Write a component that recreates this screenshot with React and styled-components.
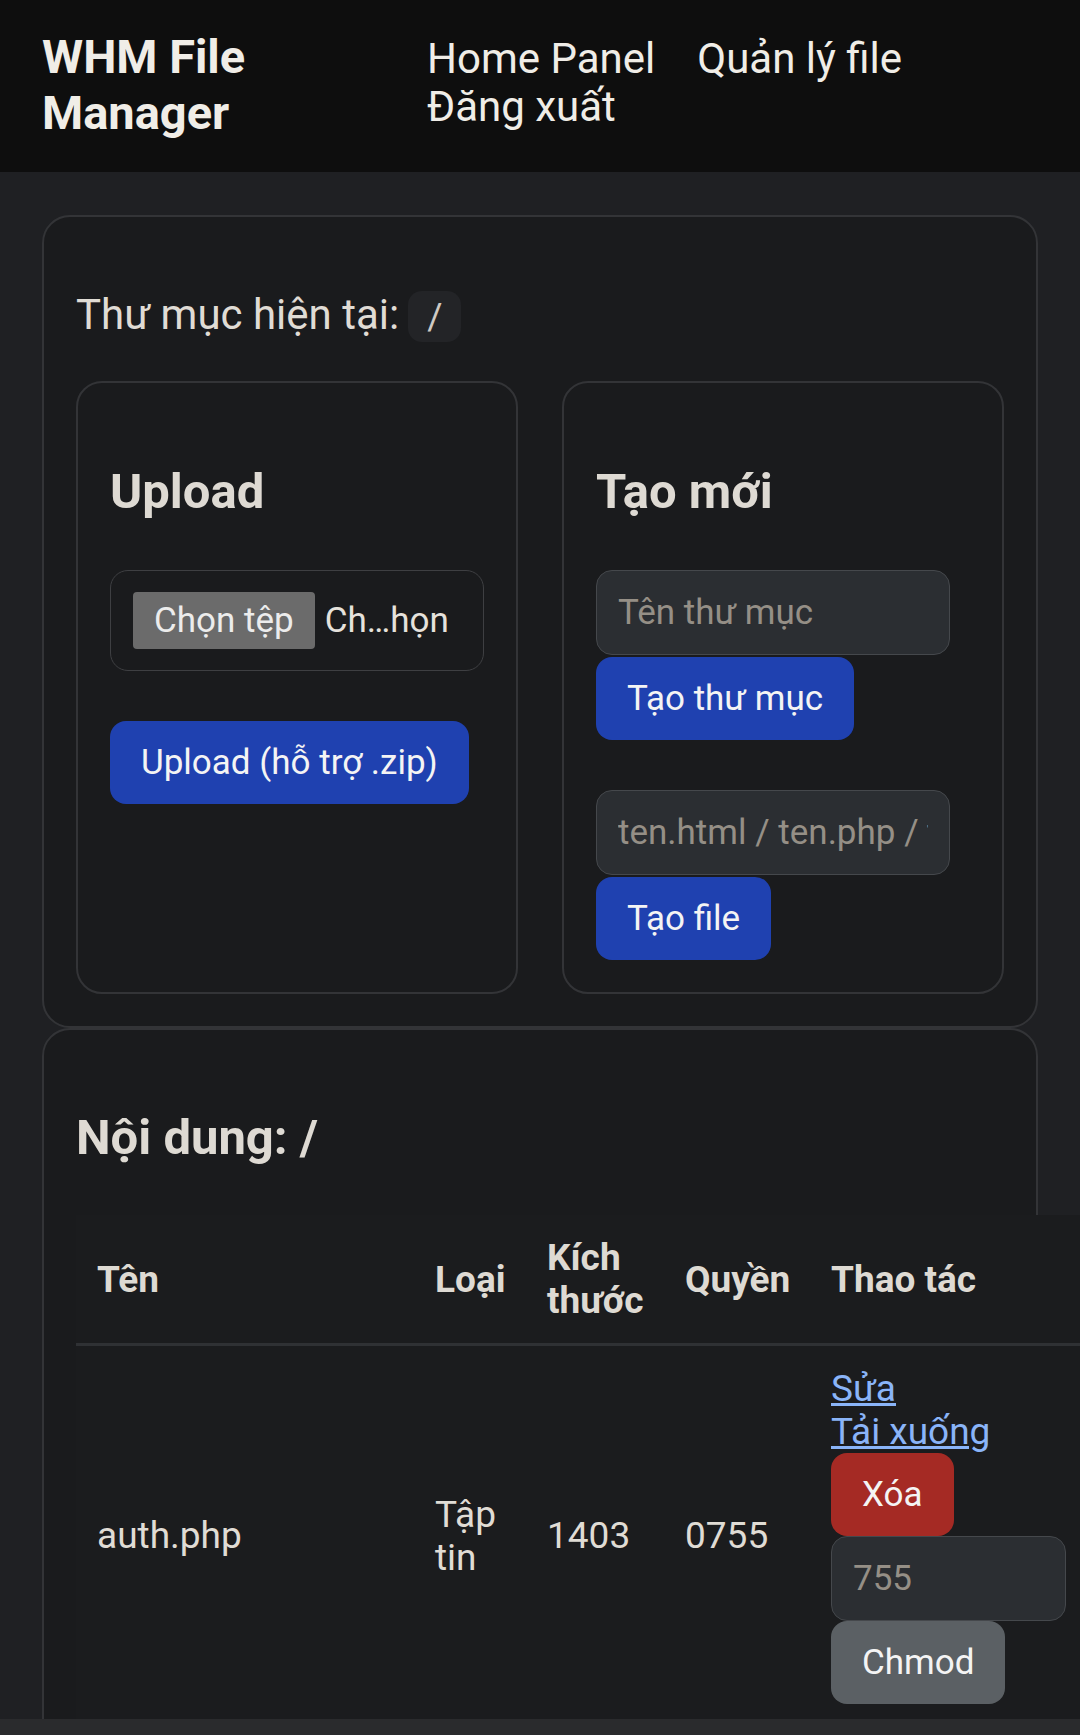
import React from 'react';
import styled, { createGlobalStyle } from 'styled-components';

const GlobalStyle = createGlobalStyle`
  html, body {
    margin: 0;
    padding: 0;
    overflow: hidden;
  }
  * {
    box-sizing: border-box;
  }
  body {
    background: #1f2023;
    color: #e0dcd5;
    font-family: Roboto, 'Noto Sans', sans-serif;
    font-size: 42px;
  }
`;

const TopBar = styled.header`
  height: 172px;
  background: #0e0e0e;
  display: flex;
  align-items: flex-start;
  padding: 29px 42px 0;
`;

const Brand = styled.div`
  flex: none;
  width: 385px;
  font-size: 47px;
  font-weight: 700;
  line-height: 55.5px;
  color: #f0ede7;
`;

const Nav = styled.nav`
  flex: 1;
  display: flex;
  flex-wrap: wrap;
  column-gap: 42px;
  margin-top: 6px;
  line-height: 48px;
`;

const NavLink = styled.a`
  color: #f0ede7;
  text-decoration: none;
  font-size: 42px;
`;

const Main = styled.main`
  padding: 43px 42px 0;
`;

const Card = styled.section`
  background: #1a1b1d;
  border: 2px solid #333437;
  border-radius: 28px;
  padding: 32px;
`;

const PathLine = styled.p`
  margin: 41px 0 42px;
`;

const Code = styled.code`
  font-family: Roboto, 'Noto Sans', sans-serif;
  font-size: 37px;
  background: #232427;
  color: #cfcac3;
  padding: 4px 19px;
  border-radius: 14px;
  margin-left: 9px;
`;

const PanelGrid = styled.div`
  display: grid;
  grid-template-columns: minmax(0, 1fr) minmax(0, 1fr);
  gap: 44px;
`;

const Panel = styled.div`
  background: #1a1b1d;
  border: 2px solid #333437;
  border-radius: 26px;
  padding: 32px;
`;

const Heading = styled.h3`
  font-size: 49px;
  font-weight: 700;
  margin: ${(p) => (p.$section ? '47px 0 49px' : '48px 0 50px')};
  color: #dedad3;
`;

const UploadForm = styled.form`
  display: flex;
  flex-direction: column;
  align-items: flex-start;
  gap: 50px;
`;

const FileBox = styled.div`
  width: 100%;
  display: flex;
  align-items: center;
  border: 1.5px solid #3e3f42;
  border-radius: 18px;
  padding: 21px 38px 21px 22px;
  font-size: 35px;
  white-space: nowrap;
  overflow: hidden;
`;

const FileButton = styled.span`
  background: #6b6b6b;
  color: #ececec;
  padding: 7px 21px;
  line-height: 43px;
  border-radius: 4px;
`;

const FileName = styled.span`
  margin-left: 10px;
  color: #e6e2dc;
`;

const Button = styled.button`
  font-family: inherit;
  font-size: 35px;
  line-height: 43px;
  padding: 20px 31px;
  border: none;
  border-radius: 16px;
  color: #f4f4f4;
  background: ${(p) =>
    p.$variant === 'danger' ? '#a52a24' : p.$variant === 'secondary' ? '#5b6064' : '#1f41b0'};
`;

const FormStack = styled.div`
  display: flex;
  flex-direction: column;
  gap: 50px;
`;

const CreateForm = styled.form`
  display: flex;
  flex-direction: column;
  align-items: flex-start;
  gap: 2px;
`;

const TextInput = styled.input`
  width: ${(p) => p.$width || '354px'};
  height: 85px;
  padding: 20px 21px;
  border: 1px solid #45484c;
  border-radius: 16px;
  background: #2b2e32;
  color: #e0dcd5;
  font-family: inherit;
  font-size: 35px;
  outline: none;

  &::placeholder {
    color: #958f86;
  }
`;

const Table = styled.table`
  border-collapse: collapse;
  table-layout: fixed;
  width: 1011px;
  background: #1b1c1e;
  font-size: 37px;
`;

const Th = styled.th`
  width: ${(p) => p.$w}px;
  text-align: left;
  font-weight: 700;
  padding: 21px;
  vertical-align: middle;
  border-bottom: 3px solid #2f3134;
  color: #dedad3;
`;

const Td = styled.td`
  padding: 21px;
  vertical-align: middle;
`;

const Actions = styled.div`
  display: flex;
  flex-direction: column;
  align-items: flex-start;
`;

const ActionLink = styled.a`
  color: #8ab4f8;
  text-decoration: underline;
`;

const BottomStrip = styled.div`
  position: fixed;
  left: 0;
  right: 0;
  bottom: 0;
  height: 16px;
  background: #2a2b2d;
  overflow: hidden;
  padding-left: 193px;
`;

const columns = [
  { label: 'Tên', w: 338 },
  { label: 'Loại', w: 112 },
  { label: 'Kích thước', w: 138 },
  { label: 'Quyền', w: 146 },
  { label: 'Thao tác', w: 277 },
];

const files = [{ name: 'auth.php', type: 'Tập tin', size: 1403, perm: '0755' }];

const App = () => {
  return (
    <>
      <GlobalStyle />
      <TopBar>
        <Brand>WHM File Manager</Brand>
        <Nav>
          <NavLink href="#">Home Panel</NavLink>
          <NavLink href="#">Quản lý file</NavLink>
          <NavLink href="#">Đăng xuất</NavLink>
        </Nav>
      </TopBar>
      <Main>
        <Card>
          <PathLine>
            Thư mục hiện tại:<Code>/</Code>
          </PathLine>
          <PanelGrid>
            <Panel>
              <Heading>Upload</Heading>
              <UploadForm onSubmit={(e) => e.preventDefault()}>
                <FileBox>
                  <FileButton>Chọn tệp</FileButton>
                  <FileName>Ch…họn</FileName>
                </FileBox>
                <Button>Upload (hỗ trợ .zip)</Button>
              </UploadForm>
            </Panel>
            <Panel>
              <Heading>Tạo mới</Heading>
              <FormStack>
                <CreateForm onSubmit={(e) => e.preventDefault()}>
                  <TextInput placeholder="Tên thư mục" />
                  <Button>Tạo thư mục</Button>
                </CreateForm>
                <CreateForm onSubmit={(e) => e.preventDefault()}>
                  <TextInput placeholder="ten.html / ten.php / ten.txt" />
                  <Button>Tạo file</Button>
                </CreateForm>
              </FormStack>
            </Panel>
          </PanelGrid>
        </Card>
        <Card>
          <Heading as="h2" $section>Nội dung: /</Heading>
          <Table>
            <thead>
              <tr>
                {columns.map((c) => (
                  <Th key={c.label} $w={c.w}>{c.label}</Th>
                ))}
              </tr>
            </thead>
            <tbody>
              {files.map((f) => (
                <tr key={f.name}>
                  <Td>{f.name}</Td>
                  <Td>{f.type}</Td>
                  <Td>{f.size}</Td>
                  <Td>{f.perm}</Td>
                  <Td>
                    <Actions>
                      <ActionLink href="#">Sửa</ActionLink>
                      <ActionLink href="#">Tải xuống</ActionLink>
                      <Button $variant="danger">Xóa</Button>
                      <TextInput $width="100%" placeholder="755" />
                      <Button $variant="secondary">Chmod</Button>
                    </Actions>
                  </Td>
                </tr>
              ))}
            </tbody>
          </Table>
        </Card>
      </Main>
      <BottomStrip>
        <svg width="64" height="16" viewBox="0 0 64 16">
          <ellipse cx="19" cy="26" rx="19" ry="14" fill="#5fb865" />
          <ellipse cx="50" cy="24" rx="14" ry="13" fill="#5fb865" />
        </svg>
      </BottomStrip>
    </>
  );
};

export default App;
